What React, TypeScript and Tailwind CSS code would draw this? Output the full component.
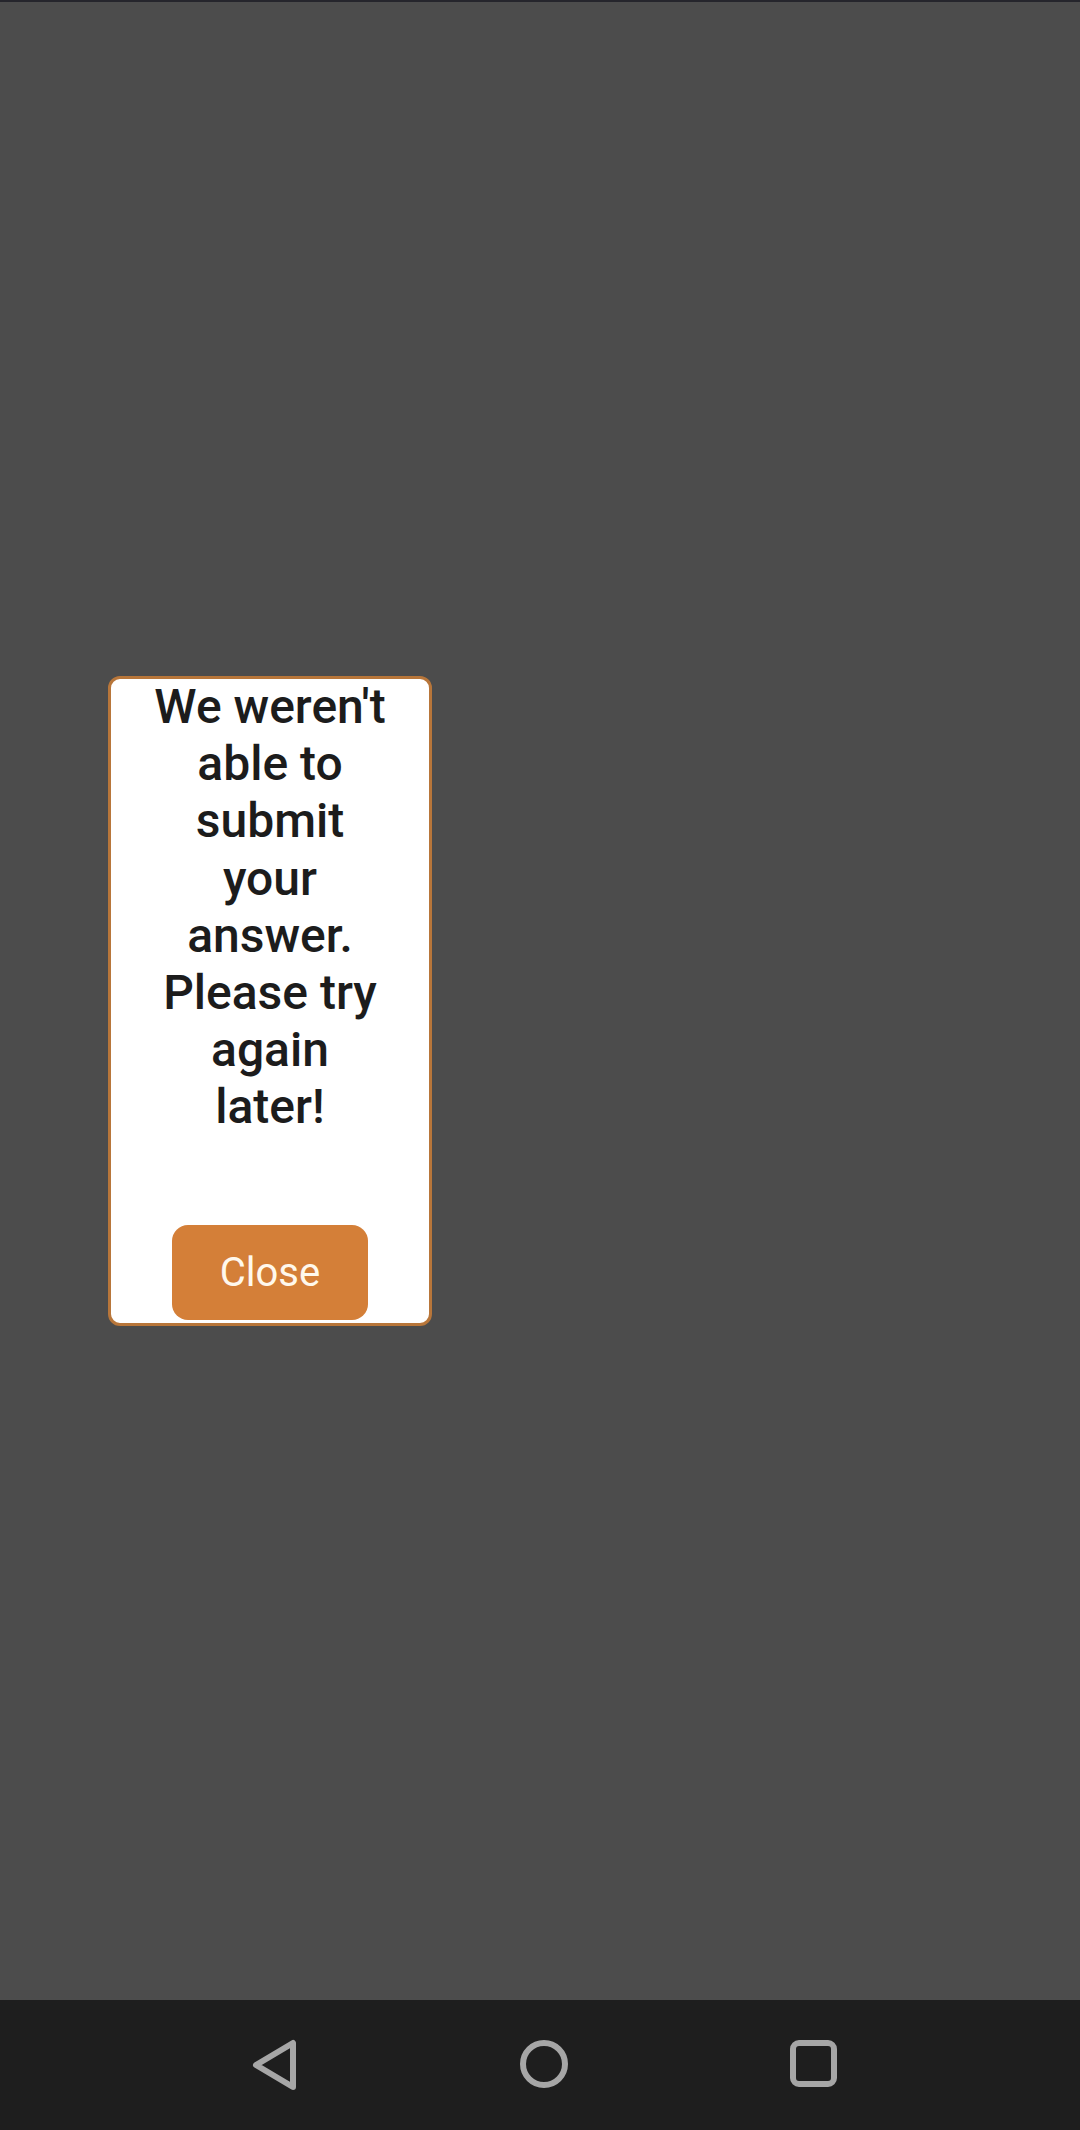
import React from "react";

export default function App() {
  const lines = ["We weren't", "able to", "submit", "your", "answer.", "Please try", "again", "later!"];
  return (
    <div className="w-[1080px] h-[2130px] flex flex-col bg-[#4c4c4c] overflow-hidden" style={{ fontFamily: "Roboto, 'Noto Sans', sans-serif" }}>
      <div className="h-[2px] bg-[#25252c]" />
      <div className="relative flex-1">
        <div className="absolute left-[108px] top-[674px] w-[324px] h-[650px] bg-white border-[3px] border-[#b8763a] rounded-[12px] flex flex-col items-center">
          <div className="-mt-[1px] text-[48px] leading-[57.2px] font-medium text-[#1c1c1c] text-center">
            {lines.map((l, i) => (
              <div key={i} className="whitespace-nowrap">{l}</div>
            ))}
          </div>
          <div className="flex-1" />
          <button className="mb-[3px] w-[196px] h-[95px] rounded-[16px] bg-[#d47f38] text-[#fff8ec] text-[40px] flex items-center justify-center">
            Close
          </button>
        </div>
      </div>
      <div className="h-[130px] bg-[#1e1e1e] flex items-center">
        <div className="relative w-full h-full">
          <svg className="absolute left-[250px] top-[38px]" width="50" height="54" viewBox="0 0 50 54">
            <path d="M43 5 L43 49 L6 27 Z" fill="none" stroke="#a6a6a6" strokeWidth="6" strokeLinejoin="round" />
          </svg>
          <svg className="absolute left-[517px] top-[37px]" width="54" height="54" viewBox="0 0 54 54">
            <circle cx="27" cy="27" r="21" fill="none" stroke="#a6a6a6" strokeWidth="6" />
          </svg>
          <svg className="absolute left-[787px] top-[37px]" width="54" height="54" viewBox="0 0 54 54">
            <rect x="6" y="6" width="41" height="41" rx="6" fill="none" stroke="#a6a6a6" strokeWidth="6" />
          </svg>
        </div>
      </div>
    </div>
  );
}
